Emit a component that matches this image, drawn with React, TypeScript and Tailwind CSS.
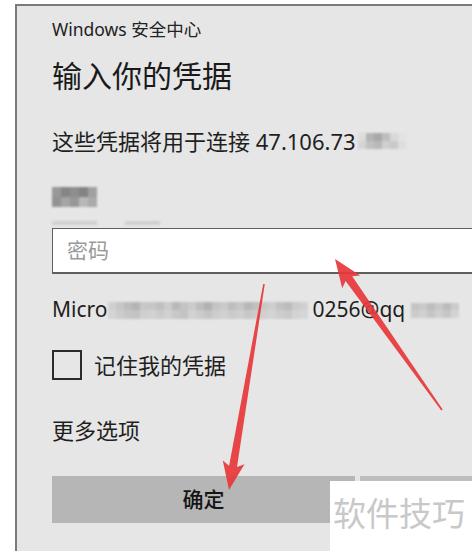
const font = "font-['Noto_Sans','Noto_Sans_CJK_SC',sans-serif]";

// pixelated smudge used to hide private values, two rows of cells
function Smudge({ top, bottom, cell = 7, className }: { top: string[]; bottom: string[]; cell?: number; className?: string }) {
  return (
    <span className={`inline-flex flex-col shrink-0 blur-[0.8px] ${className ?? ""}`}>
      {[top, bottom].map((row, r) => (
        <span key={r} className="flex flex-1">
          {row.map((c, i) => (
            <span key={i} className="shrink-0" style={{ background: c, width: cell }} />
          ))}
        </span>
      ))}
    </span>
  );
}

function Arrows() {
  return (
    <svg className="absolute inset-0 pointer-events-none" width={472} height={551} viewBox="0 0 472 551">
      <g fill="#e6383a" fillOpacity={0.93}>
        <polygon points="335,259 342.2,288.2 345.6,280.9 441.3,410.5 442.7,409.5 352.2,276.3 360.2,275.4" />
        <polygon points="229,490 244.5,464.2 237,467 264.8,284.1 263.2,283.9 229.1,465.7 222.8,460.6" />
      </g>
    </svg>
  );
}

export default function App() {
  return (
    <div className={`relative w-[472px] h-[551px] overflow-hidden bg-white ${font}`}>
      <div className="ml-[15px] mt-[4px] w-[500px] h-[560px] border-l-2 border-t-2 border-[#7b7b7b] bg-[#e6e6e6] pl-[35px] text-[#1f1f1f]">
        <div className="h-[46px] flex items-center text-[17.5px] text-[#222]">Windows 安全中心</div>
        <div className="h-[46px] flex items-center text-[30px] text-[#1a1a1a]">输入你的凭据</div>
        <div className="h-[86px] flex items-center text-[22px]">
          <span>这些凭据将用于连接 47.106.73</span>
          <Smudge
            className="h-[16px] ml-[2px]"
            cell={8}
            top={["#dcdcdc", "#b4b4b4", "#a8a8a8", "#bebebe", "#d8d8d8", "#e2e2e2"]}
            bottom={["#d4d4d4", "#c0c0c0", "#b8b8b8", "#cfcfcf", "#c9c9c9", "#dddddd"]}
          />
        </div>
        <div className="h-[44px] flex flex-col">
          <Smudge
            className="h-[20px] mt-[3px]"
            cell={9}
            top={["#999999", "#858585", "#8e8e8e", "#838383", "#a0a0a0"]}
            bottom={["#929292", "#a5a5a5", "#979797", "#b8b8b8", "#aaaaaa"]}
          />
          <div className="mt-[14px] flex gap-[28px]">
            <span className="w-[45px] h-[4px] bg-[#d0d0d0] blur-[1px]" />
            <span className="w-[35px] h-[4px] bg-[#cfcfcf] blur-[1px]" />
          </div>
        </div>
        <div className="h-[46px] flex items-center border border-b-2 border-[#5f5f5f] bg-white pl-[14px] text-[21px] text-[#9a9a9a]">
          密码
        </div>
        <div className="h-[72px] flex items-center text-[21px]">
          <span>Micro</span>
          <Smudge
            className="h-[17px]"
            cell={8}
            top={["#d0d0d0", "#c6c6c6", "#bcbcbc", "#b4b4b4", "#c8c8c8", "#c6c6c6", "#bfbfbf", "#cccccc", "#b8b8b8", "#c4c4c4", "#cbcbcb", "#bdbdbd", "#b2b2b2", "#c4c4c4", "#cacaca", "#bebebe", "#c6c6c6", "#b7b7b7", "#c0c0c0", "#c8c8c8", "#cecece", "#c2c2c2", "#bcbcbc", "#cbcbcb", "#d0d0d0"]}
            bottom={["#d4d4d4", "#cccccc", "#c6c6c6", "#c3c3c3", "#cfcfcf", "#d2d2d2", "#cbcbcb", "#d1d1d1", "#c8c8c8", "#c3c3c3", "#d2d2d2", "#cbcbcb", "#c4c4c4", "#cdcdcd", "#d1d1d1", "#cbcbcb", "#cfcfcf", "#c7c7c7", "#cccccc", "#d0d0d0", "#d4d4d4", "#cdcdcd", "#c9c9c9", "#d3d3d3", "#d6d6d6"]}
          />
          <span className="ml-[5px]">0256@qq</span>
          <Smudge
            className="h-[15px] ml-[6px]"
            cell={8}
            top={["#c4c4c4", "#cacaca", "#bdbdbd", "#c8c8c8", "#bbbbbb", "#cbcbcb"]}
            bottom={["#cbcbcb", "#d0d0d0", "#c5c5c5", "#cfcfcf", "#c6c6c6", "#d3d3d3"]}
          />
        </div>
        <div className="h-[38px] flex items-center gap-[12px]">
          <span className="w-[30px] h-[30px] shrink-0 border-2 border-[#2a2a2a]" />
          <span className="text-[22px]">记住我的凭据</span>
        </div>
        <div className="h-[92px] pt-[31px] text-[22px] leading-[30px]">更多选项</div>
        <div className="flex gap-[5px]">
          <div className="w-[303px] h-[47px] shrink-0 flex items-center justify-center bg-[#b6b6b6] text-[21px] font-medium text-[#151515]">
            确定
          </div>
          <div className="w-[200px] h-[47px] shrink-0 bg-[#bdbdbd]" />
        </div>
      </div>

      <Arrows />

      <div className="absolute left-[330px] top-[481px] right-0 bottom-0 bg-white pl-[3px] pt-[13px] text-[33px] leading-[40px] text-[#c8c8c8]">
        软件技巧
      </div>
    </div>
  );
}
